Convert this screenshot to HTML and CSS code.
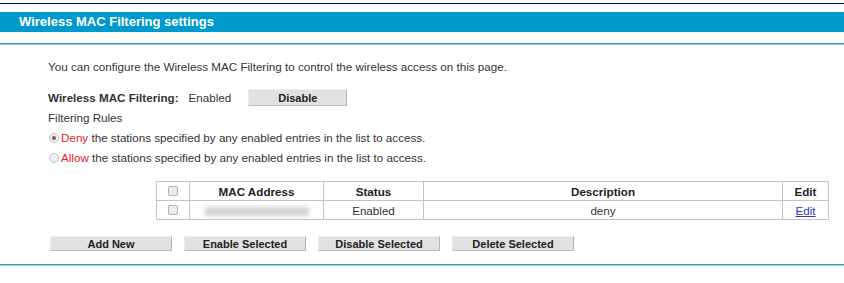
FILE: index.html
```html
<!DOCTYPE html>
<html>
<head>
<meta charset="utf-8">
<link rel="stylesheet" href="styles.css">
</head>
<body>
<div class="topline"></div>
<div class="titlebar">Wireless MAC Filtering settings</div>
<div class="sepline"></div>
<div class="content">
  <p class="intro">You can configure the Wireless MAC Filtering to control the wireless access on this page.</p>
  <div class="staterow">
    <span class="label">Wireless MAC Filtering:</span>
    <span class="state">Enabled</span>
    <button class="btn btn-disable">Disable</button>
  </div>
  <div class="line">Filtering Rules</div>
  <div class="line radio-line"><span class="radio checked"></span><span class="red">Deny</span>&nbsp;the stations specified by any enabled entries in the list to access.</div>
  <div class="line radio-line"><span class="radio"></span><span class="red">Allow</span>&nbsp;the stations specified by any enabled entries in the list to access.</div>
  <table class="list">
    <colgroup>
      <col class="c-chk"><col class="c-mac"><col class="c-status"><col class="c-desc"><col class="c-edit">
    </colgroup>
    <tr class="head">
      <th><span class="chk"></span></th>
      <th>MAC Address</th>
      <th>Status</th>
      <th>Description</th>
      <th>Edit</th>
    </tr>
    <tr>
      <td><span class="chk"></span></td>
      <td><span class="blurred"></span></td>
      <td>Enabled</td>
      <td>deny</td>
      <td><a class="edit" href="#">Edit</a></td>
    </tr>
  </table>
  <div class="actions">
    <button class="btn btn-wide">Add New</button>
    <button class="btn btn-wide">Enable Selected</button>
    <button class="btn btn-wide">Disable Selected</button>
    <button class="btn btn-wide">Delete Selected</button>
  </div>
</div>
<div class="bottomline"></div>
</body>
</html>
```
FILE: styles.css
```css
html, body {
  margin: 0;
  padding: 0;
  background: #ffffff;
  font-family: "Liberation Sans", Arial, sans-serif;
  font-size: 11.65px;
  color: #333333;
}
.topline {
  margin-top: 3px;
  height: 1px;
  background: #111111;
}
.titlebar {
  margin-top: 8px;
  height: 20px;
  line-height: 20px;
  background: #0099cc;
  color: #ffffff;
  font-weight: bold;
  font-size: 13px;
  padding-left: 19px;
}
.sepline {
  margin-top: 11px;
  height: 1px;
  background: #3a9cc4;
  border-bottom: 1px solid #8fcbe3;
}
.content {
  padding-left: 48px;
}
.intro {
  margin: 14px 0 0 0;
  line-height: 16px;
}
.staterow {
  margin-top: 14px;
  display: flex;
  align-items: center;
  height: 17px;
}
.label {
  font-weight: bold;
}
.state {
  margin-left: 10px;
}
.btn {
  font-family: "Liberation Sans", Arial, sans-serif;
  font-weight: bold;
  font-size: 11px;
  color: #222222;
  background: #e1e1e1;
  border: 1px solid #ededed;
  border-right-color: #b5b5b5;
  border-bottom-color: #bdbdbd;
  padding: 0;
  margin: 0;
  border-radius: 0;
}
.btn-disable {
  margin-left: 17px;
  width: 99px;
  height: 17px;
}
.line {
  height: 20px;
  line-height: 20px;
}
.staterow + .line {
  margin-top: 2px;
}
.radio-line {
  display: flex;
  align-items: center;
}
.radio {
  display: inline-block;
  box-sizing: border-box;
  width: 10px;
  height: 10px;
  border-radius: 50%;
  border: 1px solid #c2c2c2;
  background: #efefef;
  margin-left: 1px;
  margin-right: 2px;
  position: relative;
}
.radio.checked::after {
  content: "";
  position: absolute;
  left: 2px;
  top: 2px;
  width: 4px;
  height: 4px;
  border-radius: 50%;
  background: #666666;
}
.red {
  color: #e8202a;
}
.list {
  margin-top: 13px;
  margin-left: 108px;
  border-collapse: collapse;
  width: 673px;
}
.c-chk { width: 33px; }
.c-mac { width: 134px; }
.c-status { width: 100px; }
.c-desc { width: 359px; }
.c-edit { width: 46px; }
.list th, .list td {
  border: 1px solid #c4c4c4;
  text-align: center;
  padding: 0;
  height: 18px;
  font-size: 11.65px;
}
.list th {
  font-weight: bold;
  color: #222222;
}
.chk {
  display: inline-block;
  box-sizing: border-box;
  width: 10px;
  height: 10px;
  border: 1px solid #b3b3b3;
  border-radius: 2px;
  background: #ececec;
  vertical-align: middle;
  margin-top: -2px;
}
.blurred {
  display: inline-block;
  width: 104px;
  height: 9px;
  background: #d0d0d0;
  filter: blur(2.5px);
  vertical-align: middle;
}
.edit {
  color: #3232c8;
  text-decoration: underline;
}
.actions {
  margin-top: 16px;
  margin-left: 2px;
  display: flex;
  gap: 12px;
}
.btn-wide {
  width: 122px;
  height: 15px;
}
.bottomline {
  margin-top: 13px;
  height: 1px;
  background: #3a9cc4;
  border-bottom: 1px solid #8fcbe3;
}
```
